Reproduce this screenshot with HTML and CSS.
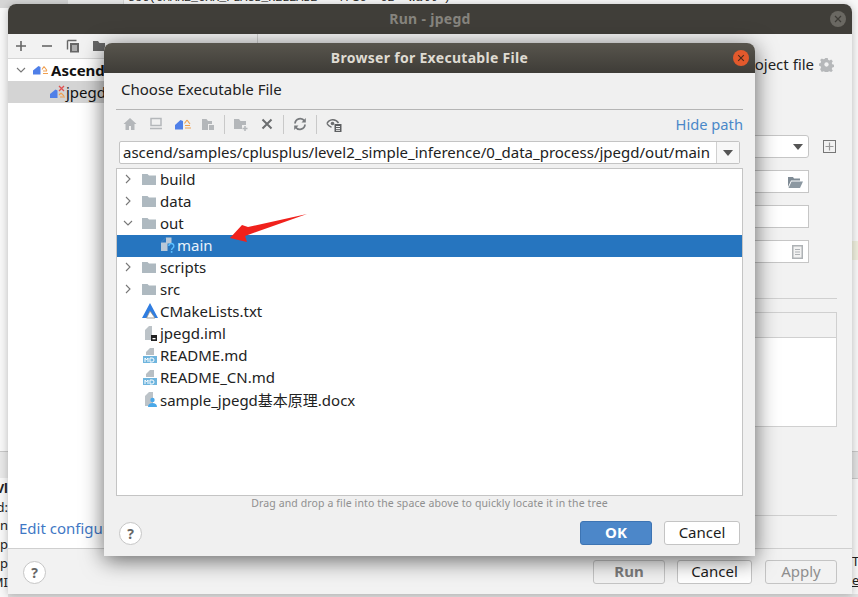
FILE: index.html
```html
<!DOCTYPE html>
<html lang="en">
<head>
<meta charset="utf-8">
<title>Browser for Executable File</title>
<link rel="stylesheet" href="styles.css">
</head>
<body>
<div class="desktop">
  <div class="bg-gutter"><span class="bg-lineno">17</span></div>
  <div class="bg-editor">set(CMAKE_CXX_FLAGS_RELEASE "-fPIC -O2 -Wall")</div>
  <div class="bg-leftband"></div>
  <div class="bg-rightband"></div>
  <div class="bg-righttint"></div>
  <div class="bg-bottom"></div>
  <div class="bg-left">
    <span class="frag b">Vl</span><span class="frag">d:</span><span class="frag">n</span><span class="frag">p</span><span class="frag">p</span><span class="frag">MI</span>
  </div>
  <div class="bg-right"><span class="frag">T</span><span class="frag under">e</span></div>

  <section class="win run">
    <header class="tbar inactive">
      <span class="tbar-title">Run - jpegd</span>
      <span class="close-dim"><svg viewBox="0 0 16 16" width="16" height="16"><circle cx="8" cy="8" r="8" fill="#6a6862"/><path d="M5 5l6 6M11 5l-6 6" stroke="#3d3b36" stroke-width="1.2"/></svg></span>
    </header>
    <div class="run-body">
      <aside class="run-side">
        <div class="side-tools">
          <svg viewBox="0 0 14 14" width="14" height="14"><path d="M2 7h10M7 2v10" stroke="#666" stroke-width="1.6"/></svg>
          <svg viewBox="0 0 14 14" width="14" height="14"><path d="M2 7h10" stroke="#666" stroke-width="1.6"/></svg>
          <svg viewBox="0 0 14 14" width="14" height="14"><path d="M1.5 1.5h9M1.5 1.5v9" stroke="#666" stroke-width="1.4" fill="none"/><rect x="4" y="4" width="9" height="9.500" fill="#666"/><path d="M6 7h5M6 9h5M6 11h5" stroke="#f2f2f2"/></svg>
          <svg viewBox="0 0 14 14" width="14" height="14"><path d="M1 2h5l1.500 2H13v8H1z" fill="#666"/></svg>
        </div>
        <div class="side-row"><svg class="chev" viewBox="0 0 10 10" width="10" height="10"><path d="M1 3l4 4 4-4" stroke="#777" stroke-width="1.100" fill="none"/></svg><svg viewBox="0 0 17 10" width="17" height="10"><path d="M1 9.500V5.500L6.500 1l2 1v7.500z" fill="#4f7fe8"/><path d="M12 1.500l-2 3M12 1.500l3 4M11 6h4M11 8.500h5" stroke="#f0a050" stroke-width="1.100" fill="none"/></svg><strong class="side-label">Ascend</strong></div>
        <div class="side-row sel"><svg viewBox="0 0 16 14" width="16" height="14"><path d="M0 13V9l5.500-4.500 2 1V13z" fill="#4f7fe8"/><path d="M11 8l-2 2M11 8l3 3M10 12h5" stroke="#f0a050" stroke-width="1.100" fill="none"/><path d="M9 1l5 5M14 1l-5 5" stroke="#e05050" stroke-width="1.300"/></svg><span class="side-label">jpegd</span></div>
        <a class="edit-link">Edit configuration templates...</a>
      </aside>
      <main class="run-main">
        <div class="proj-row"><span class="proj-text">Store as project file</span><svg viewBox="0 0 16 16" width="15" height="15"><path d="M6.700 1h2.600l.4 2 1.500.7 1.800-1 1.700 1.900-1.100 1.700.6 1.500 2 .5v2.400l-2 .5-.6 1.500 1.100 1.700-1.700 1.700-1.800-1-1.500.6-.4 2H6.700l-.5-2-1.500-.6-1.700 1L1.200 13l1.100-1.700-.6-1.500-1.700-.5V6.900l1.700-.5.6-1.500L1.200 3.200 3 1.500l1.700 1 1.500-.7z" fill="#b6b8ba"/><circle cx="8" cy="8" r="2.300" fill="#f2f2f2"/></svg></div>
        <div class="form">
          <div class="fld-row"><div class="fld round"><svg viewBox="0 0 10 6" width="10" height="6"><path d="M0 0h10L5 6z" fill="#555"/></svg></div><svg class="plus-box" viewBox="0 0 13 13" width="13" height="13"><rect x=".5" y=".5" width="12" height="12" fill="none" stroke="#777"/><path d="M2.500 6.500h8M6.500 2.500v8" stroke="#999" stroke-width="1.200"/></svg></div>
          <div class="fld"><svg viewBox="0 0 16 12" width="16" height="12"><path d="M1 1h5l1 1.500h6v2H4L1 11z" fill="#7f8b95"/><path d="M4.500 5.500H16L13 12H1.500z" fill="#8c98a1"/></svg></div>
          <div class="fld"></div>
          <div class="fld"><svg viewBox="0 0 11 14" width="11" height="14"><rect width="11" height="14" fill="#aeb2b5"/><rect x="1.500" y="1.500" width="8" height="11" fill="#f2f2f2"/><path d="M3 4.500h5M3 7h5M3 9.500h5" stroke="#aeb2b5"/></svg></div>
        </div>
        <div class="rule first"></div>
        <div class="table"><div class="thead"></div><div class="tbody"></div></div>
        <div class="rule last"></div>
      </main>
    </div>
    <footer class="run-foot">
      <span class="help">?</span>
      <div class="foot-btns">
        <button class="btn dis bold">Run</button>
        <button class="btn">Cancel</button>
        <button class="btn dis">Apply</button>
      </div>
    </footer>
  </section>

  <section class="win dlg">
    <header class="tbar active">
      <span class="tbar-title">Browser for Executable File</span>
      <span class="close-act"><svg viewBox="0 0 16 16" width="16" height="16"><circle cx="8" cy="8" r="8" fill="#e2592c"/><path d="M5.200 5.200l5.600 5.600M10.800 5.200l-5.600 5.600" stroke="#4a2a1c" stroke-width="1.100"/></svg></span>
    </header>
    <div class="dlg-body">
      <h1 class="dlg-head">Choose Executable File</h1>
      <div class="dlg-tools">
        <div class="tools">
          <svg viewBox="0 0 14 14" width="14" height="14"><path d="M7 1L0.500 7H2.500v6h3.500V9h2v4h3.500V7h2z" fill="#b4b7ba"/></svg>
          <svg viewBox="0 0 14 14" width="14" height="14"><path d="M2 1.500h10v7H2z" fill="none" stroke="#b4b7ba" stroke-width="1.500"/><path d="M1 11.500h12" stroke="#b4b7ba" stroke-width="1.500"/></svg>
          <svg class="tool-wide" viewBox="0 0 17 11" width="17" height="11"><path d="M1 10.500V6L6.500 1l2.500 1v8.500z" fill="#4f7fe8"/><path d="M13 1l-2.500 3.500M13 1l3 4M11 6.500h5M11 9h6" stroke="#f0a050" stroke-width="1.100" fill="none"/></svg>
          <svg viewBox="0 0 14 14" width="14" height="14"><path d="M1 2h4.500l1.500 2h4v3H7v6H1z" fill="#b4b7ba"/><rect x="8" y="8" width="5" height="5" fill="#b4b7ba"/></svg>
          <i class="sep"></i>
          <svg viewBox="0 0 14 14" width="14" height="14"><path d="M0 2h5l1.500 2H12v4H8v4H0z" fill="#b4b7ba"/><path d="M11 9v5M8.500 11.500h5" stroke="#b4b7ba" stroke-width="1.500"/></svg>
          <svg viewBox="0 0 14 14" width="14" height="14"><path d="M2.500 2.500l9 9M11.500 2.500l-9 9" stroke="#6c6e70" stroke-width="2"/></svg>
          <i class="sep"></i>
          <svg viewBox="0 0 14 14" width="14" height="14"><path d="M2 6.500A5.200 5.200 0 0 1 11.500 4M12 7.500A5.200 5.200 0 0 1 2.500 10" fill="none" stroke="#777a7d" stroke-width="1.800"/><path d="M12.800 1v4.500H8.500zM1.200 13V8.500h4.300z" fill="#777a7d"/></svg>
          <i class="sep"></i>
          <svg viewBox="0 0 16 15" width="16" height="15"><path d="M1 6.500C3 2 9.500 1 12.500 6" fill="none" stroke="#6c6e70" stroke-width="1.500"/><path d="M1 6.500c1 2 2.500 3.300 4.500 3.800" fill="none" stroke="#6c6e70" stroke-width="1.500"/><circle cx="6.500" cy="6.500" r="1.800" fill="#6c6e70"/><rect x="8.500" y="7" width="7" height="8" fill="#5d5f61"/><path d="M10 9.500h4M10 11.500h4M10 13.300h4" stroke="#f0f0f0"/></svg>
        </div>
        <a class="hide-path">Hide path</a>
      </div>
      <div class="path-box">
        <span class="path-val">ascend/samples/cplusplus/level2_simple_inference/0_data_process/jpegd/out/main</span>
        <span class="path-drop"><svg viewBox="0 0 10 6" width="10" height="6"><path d="M0 0h10L5 6z" fill="#555"/></svg></span>
      </div>
      <div class="tree">
        <div class="row"><svg class="chev" viewBox="0 0 10 10" width="10" height="10"><path d="M3 1l4 4-4 4" stroke="#777" stroke-width="1.100" fill="none"/></svg><svg class="folder" viewBox="0 0 14 12" width="14" height="12"><path d="M0 1h5.500l1.500 1.500h7V12H0z" fill="#aeb9c0"/></svg><span>build</span></div>
        <div class="row"><svg class="chev" viewBox="0 0 10 10" width="10" height="10"><path d="M3 1l4 4-4 4" stroke="#777" stroke-width="1.100" fill="none"/></svg><svg class="folder" viewBox="0 0 14 12" width="14" height="12"><path d="M0 1h5.500l1.500 1.500h7V12H0z" fill="#aeb9c0"/></svg><span>data</span></div>
        <div class="row"><svg class="chev" viewBox="0 0 10 10" width="10" height="10"><path d="M1 3l4 4 4-4" stroke="#777" stroke-width="1.100" fill="none"/></svg><svg class="folder" viewBox="0 0 14 12" width="14" height="12"><path d="M0 1h5.500l1.500 1.500h7V12H0z" fill="#aeb9c0"/></svg><span>out</span></div>
        <div class="row sel child"><svg class="file" viewBox="0 0 14 16" width="14" height="16"><path d="M0 5.500L5 .5h5.500V14H0z" fill="#b9c9d8"/><path d="M5 .5v5H0z" fill="#2675bf"/><path d="M6.500 6.500h7.500V16H6.500z" fill="#2675bf"/><path d="M7.800 9a2.500 2.500 0 1 1 4 2c-.9.700-1.200 1-1.200 1.900" fill="none" stroke="#5cc0ff" stroke-width="1.500"/><rect x="9.800" y="14" width="1.600" height="1.800" fill="#5cc0ff"/></svg><span>main</span></div>
        <div class="row"><svg class="chev" viewBox="0 0 10 10" width="10" height="10"><path d="M3 1l4 4-4 4" stroke="#777" stroke-width="1.100" fill="none"/></svg><svg class="folder" viewBox="0 0 14 12" width="14" height="12"><path d="M0 1h5.500l1.500 1.500h7V12H0z" fill="#aeb9c0"/></svg><span>scripts</span></div>
        <div class="row"><svg class="chev" viewBox="0 0 10 10" width="10" height="10"><path d="M3 1l4 4-4 4" stroke="#777" stroke-width="1.100" fill="none"/></svg><svg class="folder" viewBox="0 0 14 12" width="14" height="12"><path d="M0 1h5.500l1.500 1.500h7V12H0z" fill="#aeb9c0"/></svg><span>src</span></div>
        <div class="row leaf"><svg class="ficon" viewBox="0 0 16 16" width="16" height="16"><path d="M8 0L0 15h4.500L8 8l5 7h3z" fill="#2f7de1"/><path d="M8 8l-3.500 7H13z" fill="#fff" stroke="#777" stroke-width=".7"/></svg><span>CMakeLists.txt</span></div>
        <div class="row leaf"><svg class="ficon" viewBox="0 0 16 16" width="16" height="16"><path d="M3 5l4-4h3v14H3z" fill="#bcc3c8"/><rect x="9" y="10" width="6" height="6" fill="#222"/><rect x="10.500" y="13" width="3" height="1.300" fill="#fff"/></svg><span>jpegd.iml</span></div>
        <div class="row leaf"><svg class="ficon" viewBox="0 0 16 16" width="16" height="16"><path d="M4 5l4-4h4v7H4z" fill="#b8bfc4"/><rect x="1" y="9" width="14" height="7" fill="#6fb5de"/><path d="M3 15v-4l1.500 2 1.500-2v4M8 11v4h2a2 2 0 0 0 0-4z" stroke="#fff" fill="none"/></svg><span>README.md</span></div>
        <div class="row leaf"><svg class="ficon" viewBox="0 0 16 16" width="16" height="16"><path d="M4 5l4-4h4v7H4z" fill="#b8bfc4"/><rect x="1" y="9" width="14" height="7" fill="#6fb5de"/><path d="M3 15v-4l1.500 2 1.500-2v4M8 11v4h2a2 2 0 0 0 0-4z" stroke="#fff" fill="none"/></svg><span>README_CN.md</span></div>
        <div class="row leaf"><svg class="ficon" viewBox="0 0 16 16" width="16" height="16"><path d="M3 5l4-4h4v14H3z" fill="#bcc3c8"/><circle cx="10.500" cy="9" r="2.200" fill="#4aa8e8"/><path d="M6 16c0-3 2-4 4.500-4s4.500 1 4.500 4z" fill="#4aa8e8"/></svg><span>sample_jpegd基本原理.docx</span></div>
      </div>
      <p class="hint">Drag and drop a file into the space above to quickly locate it in the tree</p>
      <div class="dlg-foot">
        <span class="help">?</span>
        <div class="foot-btns">
          <button class="btn ok">OK</button>
          <button class="btn">Cancel</button>
        </div>
      </div>
    </div>
  </section>

  <svg class="arrow" viewBox="0 0 80 34" width="80" height="34"><path d="M78 1L19 14l-6-2L1 25l17 4-2-6z" fill="#f0211c"/></svg>
</div>
</body>
</html>
```

FILE: styles.css
```css
html, body { margin: 0; padding: 0; }
body { font-family: "Noto Sans", "Noto Sans CJK SC", sans-serif; color: #222; }
.desktop { position: relative; width: 858px; height: 597px; overflow: hidden; background: #f8f8f8; }
.bg-gutter { position: absolute; left: 0; top: 0; width: 123px; height: 8px; background: linear-gradient(90deg, #d6d6d6 68px, #ececec 68px); border-right: 1px solid #d8d8d8; }
.bg-lineno { position: absolute; left: 75px; top: -10px; font: 11.700px "Liberation Mono", monospace; color: #999; }
.bg-editor { position: absolute; left: 128px; top: -9px; font: 11.700px "Liberation Mono", monospace; color: #222; white-space: pre; }
.bg-leftband { position: absolute; left: 0; top: 451px; width: 8px; height: 27px; background: #e8e8e8; border-top: 1px solid #c8c8c8; box-sizing: border-box; }
.bg-rightband { position: absolute; right: 0; top: 451px; width: 6px; height: 28px; background: #e2e2e2; border-top: 1px solid #c8c8c8; border-bottom: 1px solid #c8c8c8; box-sizing: border-box; }
.bg-righttint { position: absolute; right: 0; top: 241px; width: 6px; height: 19px; background: #eeeedd; }
.bg-bottom { position: absolute; left: 8px; right: 0; top: 594px; height: 3px; background: #e2e2e2; }
.bg-left { position: absolute; left: 0; top: 479px; width: 8px; display: flex; flex-direction: column; align-items: flex-end; font-size: 13px; line-height: 18.700px; overflow: hidden; color: #222; }
.bg-right { position: absolute; right: 0; top: 552px; width: 6px; display: flex; flex-direction: column; font-size: 13px; line-height: 19px; overflow: hidden; color: #222; }
.frag { display: block; white-space: nowrap; }
.frag.b { font-weight: 700; }
.frag.under { text-decoration: underline; }

.win { position: absolute; display: flex; flex-direction: column; border-radius: 8px 8px 0 0; }
.run { left: 8px; top: 4px; width: 844px; height: 590px; background: #f2f2f2; box-shadow: 0 1px 8px rgba(0,0,0,.25); }
.dlg { left: 104px; top: 43px; width: 651px; height: 513px; background: #f0f0f0; box-shadow: 0 4px 22px rgba(0,0,0,.6); }

.tbar { flex: none; height: 30px; box-sizing: border-box; padding-bottom: 2px; position: relative; display: flex; align-items: center; justify-content: center; border-radius: 8px 8px 0 0; font-weight: 700; font-size: 14px; letter-spacing: .3px; }
.tbar.inactive { background: #403e39; color: #86847e; }
.tbar.active { background: linear-gradient(#58554d, #3e3c37); color: #dfdbd2; }
.close-dim { position: absolute; right: 6px; top: 7px; height: 16px; }
.close-act { position: absolute; right: 6px; top: 7px; height: 16px; }

.run-body { flex: 1; display: flex; min-height: 0; }
.run-side { width: 250px; display: flex; flex-direction: column; background: #fff; border-right: 1px solid #d0d0d0; box-sizing: border-box; }
.side-tools { height: 24px; background: #f2f2f2; border-bottom: 1px solid #d6d6d6; display: flex; align-items: center; gap: 12px; padding-left: 6px; }
.side-row { height: 22px; display: flex; align-items: center; padding-left: 8px; padding-bottom: 1px; box-sizing: border-box; font-size: 15px; color: #111; }
.side-row .chev { margin-right: 6px; }
.side-row.sel { background: #d4d4d4; padding-left: 42px; }
.side-label { margin-left: 2px; }
.side-row.sel .side-label { margin-left: 0; }
.edit-link { margin-top: auto; margin-left: 11px; margin-bottom: 8px; line-height: 24px; color: #3f78c5; font-size: 15px; white-space: nowrap; }

.run-main { flex: 1; display: flex; flex-direction: column; padding: 0 15px 0 0; min-width: 0; }
.proj-row { height: 54px; padding-top: 6px; box-sizing: border-box; display: flex; align-items: center; justify-content: flex-end; gap: 5px; padding-right: 3px; font-size: 15px; }
.proj-text { color: #222; }
.form { margin-top: 47px; display: flex; flex-direction: column; gap: 12px; }
.fld-row { display: flex; align-items: center; gap: 14px; }
.fld { height: 23px; width: 551px; box-sizing: border-box; background: #fff; border: 1px solid #c6c6c6; display: flex; align-items: center; justify-content: flex-end; padding-right: 5px; }
.fld.round { border-radius: 3px; }
.rule { height: 1px; background: #d0d0d0; }
.rule.first { margin-top: 35px; }
.table { margin-top: 13px; border: 1px solid #d0d0d0; }
.thead { height: 24px; background: #f2f2f2; border-bottom: 1px solid #d0d0d0; }
.tbody { height: 88px; background: #fff; }
.rule.last { margin-top: 88px; }

.run-foot { flex: none; height: 46px; display: flex; align-items: center; justify-content: space-between; padding: 1px 15px 0 15px; background: #f2f2f2; border-top: 1px solid #cfcfcf; box-sizing: border-box; }
.foot-btns { display: flex; gap: 12px; }
.help { width: 21px; height: 21px; border: 1px solid #c6c6c6; background: #fff; border-radius: 50%; display: flex; align-items: center; justify-content: center; font-size: 14px; font-weight: 700; color: #666; }
.btn { width: 72px; height: 24px; padding: 0 0 2px; box-sizing: border-box; border: 1px solid #c4c4c4; border-radius: 3px; background: #fff; font: 15px "Noto Sans", sans-serif; color: #1c1c1c; display: flex; align-items: center; justify-content: center; }
.btn.dis { background: #f2f2f2; color: #8e8e8e; }
.btn.bold { font-weight: 700; color: #7b7b7b; }
.btn.ok { background: #4c87c9; border-color: #3d74b3; color: #fff; font-weight: 700; }

.dlg-body { flex: 1; display: flex; flex-direction: column; padding: 0 12px; min-height: 0; }
.dlg-head { margin: 0; height: 32px; padding: 0 0 4px 5px; display: flex; align-items: center; font-size: 15px; font-weight: 400; color: #222; border-bottom: 1px solid #b5b5b5; }
.dlg-tools { height: 31px; padding-bottom: 3px; box-sizing: border-box; display: flex; align-items: center; justify-content: space-between; }
.tools { display: flex; align-items: center; gap: 12px; padding-left: 7px; }
.tool-wide { margin: 0 -1.500px; }
.sep { width: 1px; height: 19px; margin: 0 -3px; background: #c9c9c9; }
.hide-path { color: #4a88c9; font-size: 14.700px; }
.path-box { height: 23px; margin: 0 3px; display: flex; background: #fff; border: 1px solid #c4c4c4; border-radius: 2px; box-sizing: border-box; }
.path-val { flex: 1; padding-left: 3px; font-size: 15px; line-height: 21px; color: #222; white-space: nowrap; overflow: hidden; }
.path-drop { width: 22px; border-left: 1px solid #d0d0d0; display: flex; align-items: center; justify-content: center; background: #f7f7f7; }
.tree { margin-top: 4px; height: 328px; box-sizing: border-box; background: #fff; border: 1px solid #c4c4c4; }
.row { height: 22px; padding-bottom: 2px; box-sizing: border-box; display: flex; align-items: center; font-size: 15px; color: #222; }
.row .chev { margin-left: 6px; margin-right: 9px; flex: none; }
.row .folder { margin-right: 4px; flex: none; }
.row.child { padding-left: 44px; }
.row.child .file { margin-right: 2px; }
.row.sel { background: #2675bf; color: #e9f2fa; }
.row.leaf { padding-left: 25px; }
.row.leaf .ficon { margin-right: 2px; }
.hint { margin: 0; height: 17px; line-height: 15px; text-align: center; font-size: 10.500px; color: #8f8f8f; letter-spacing: .12px; }
.dlg-foot { flex: 1; display: flex; align-items: center; justify-content: space-between; padding: 0 3px 3px; }
.dlg-foot .foot-btns { gap: 12px; }
.dlg-foot .btn:last-child { width: 76px; }
.run-foot .btn:nth-child(2) { width: 75px; }
.run-foot .btn:nth-child(3) { margin-left: 1px; }
.arrow { position: absolute; left: 229px; top: 213px; }
```
